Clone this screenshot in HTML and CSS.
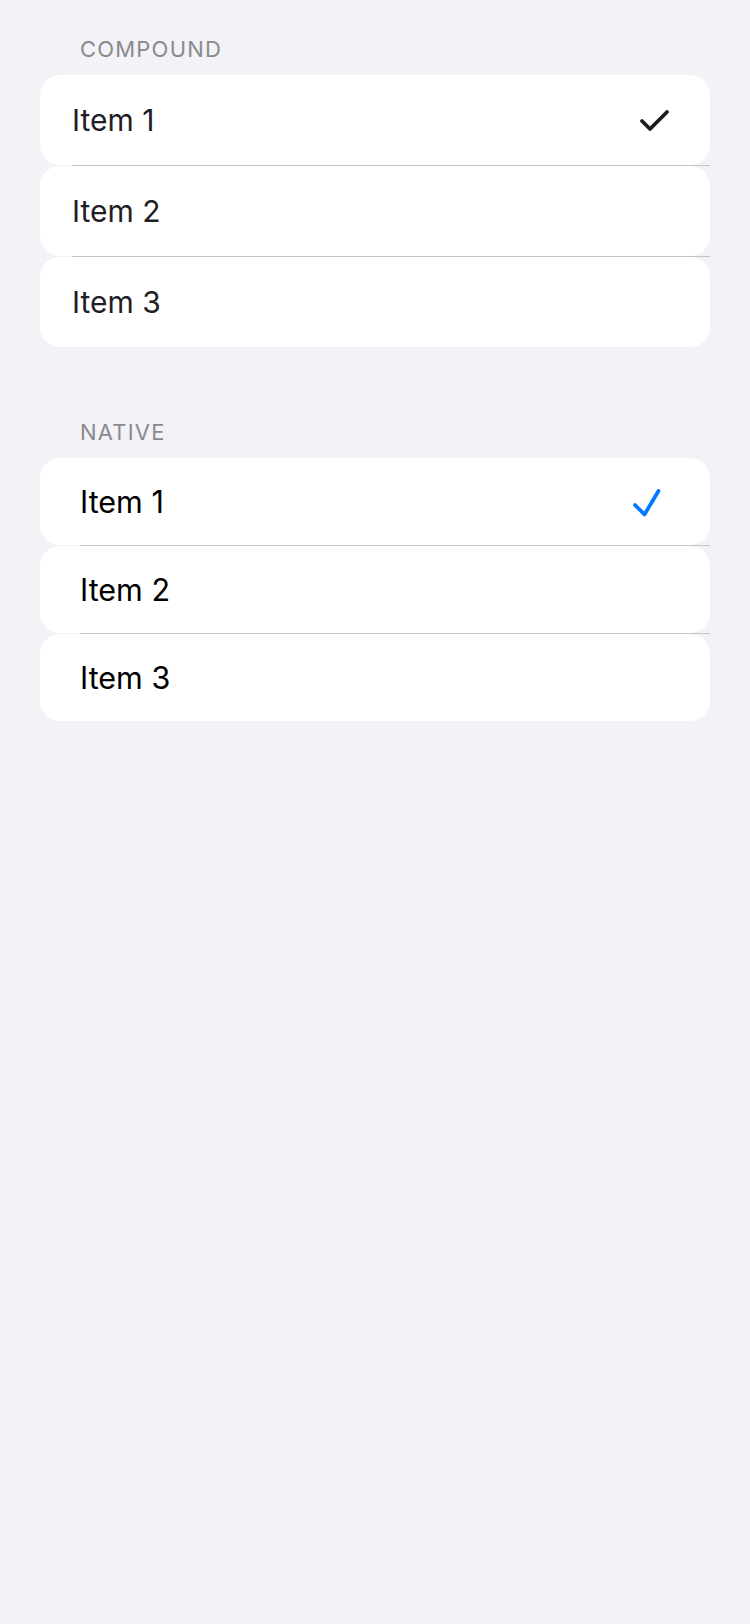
FILE: index.html
```html
<!DOCTYPE html>
<html>
<head>
<meta charset="utf-8">
<link rel="stylesheet" href="styles.css">
</head>
<body>
<div class="page">
  <section class="group compound">
    <div class="group-title">COMPOUND</div>
    <div class="list">
      <div class="row">
        <span class="label">Item 1</span>
        <svg class="check" width="34" height="28" viewBox="0 0 34 28"><path d="M4 15 L12 23 L29 6" fill="none" stroke="#1c1c1e" stroke-width="3.8" stroke-linecap="round" stroke-linejoin="round"/></svg>
      </div>
      <div class="sep"></div>
      <div class="row"><span class="label">Item 2</span></div>
      <div class="sep"></div>
      <div class="row"><span class="label">Item 3</span></div>
    </div>
  </section>
  <section class="group native">
    <div class="group-title">NATIVE</div>
    <div class="list">
      <div class="row">
        <span class="label">Item 1</span>
        <svg class="check" width="34" height="34" viewBox="0 0 34 34"><path d="M6 20 L15.5 29.5 L29.5 6" fill="none" stroke="#007aff" stroke-width="3.8" stroke-linecap="round" stroke-linejoin="round"/></svg>
      </div>
      <div class="sep"></div>
      <div class="row"><span class="label">Item 2</span></div>
      <div class="sep"></div>
      <div class="row"><span class="label">Item 3</span></div>
    </div>
  </section>
</div>
</body>
</html>
```

FILE: styles.css
```css
html, body {
  margin: 0;
  padding: 0;
  background: #f2f2f7;
}
body {
  font-family: Inter, "Noto Sans", "Liberation Sans", sans-serif;
  min-height: 1624px;
}
.page {
  padding: 36px 40px 0 40px;
  display: flex;
  flex-direction: column;
  gap: 72px;
}
.group-title {
  font-size: 22px;
  line-height: 26px;
  color: #8a8a8e;
  padding-left: 40px;
  margin-bottom: 13px;
  letter-spacing: 1.2px;
}
.list {
  display: flex;
  flex-direction: column;
}
.row {
  background: #ffffff;
  border-radius: 20px;
  display: flex;
  align-items: center;
  justify-content: space-between;
  font-size: 30px;
}
.compound .row {
  height: 90px;
  padding: 0 38px 0 32px;
  color: #1f2023;
}
.native .row {
  height: 87px;
  padding: 0 47px 0 40px;
  color: #000000;
  font-size: 30.5px;
}
.sep {
  height: 1px;
}
.compound .sep {
  margin-left: 32px;
  background: #bfc4cb;
}
.native .sep {
  margin-left: 40px;
  background: #c6c6c8;
}
.check {
  display: block;
}
```
